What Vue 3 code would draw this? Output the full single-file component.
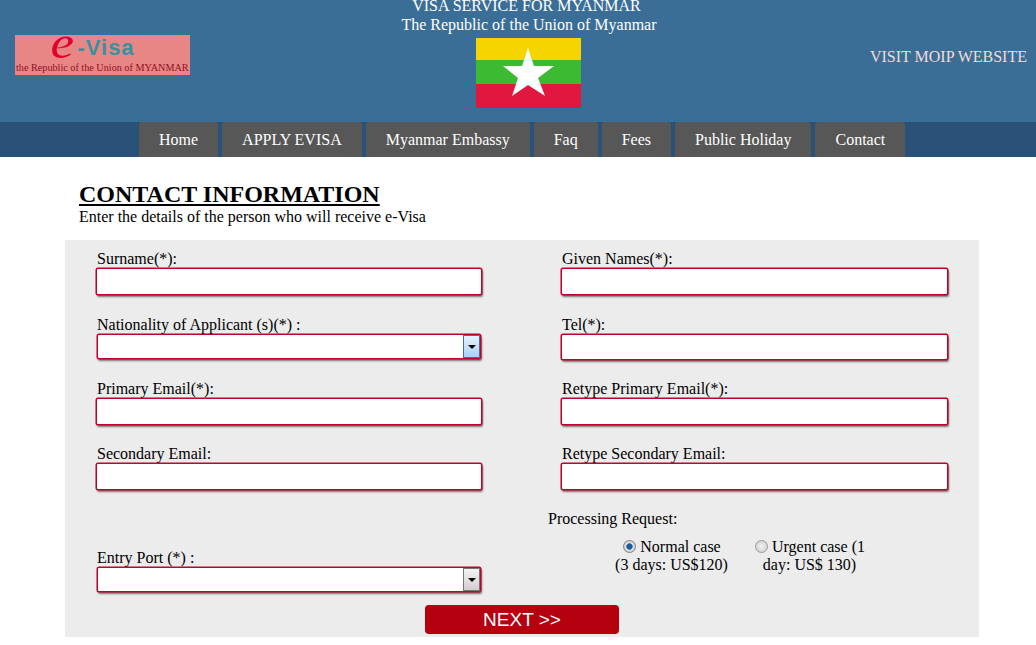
<script setup>
const nav = ['Home', 'APPLY EVISA', 'Myanmar Embassy', 'Faq', 'Fees', 'Public Holiday', 'Contact']
</script>

<template>
  <div class="page">
    <header class="top">
      <div class="logo">
        <div class="logo-mark"><span class="logo-e">e</span><span class="logo-visa">-Visa</span></div>
        <div class="logo-sub">the Republic of the Union of MYANMAR</div>
      </div>
      <div class="center">
        <div class="line one">VISA SERVICE FOR MYANMAR</div>
        <div class="line">The Republic of the Union of Myanmar</div>
        <svg class="flag" viewBox="0 0 105 70" width="105" height="70">
          <rect width="105" height="22" fill="#f5d400" />
          <rect y="22" width="105" height="24" fill="#3cba31" />
          <rect y="46" width="105" height="24" fill="#e2173f" />
          <polygon fill="#fff" points="52,10 58,28 78,28 62,40 69,58 52,47 36,58 42,40 27,28 46,28" />
        </svg>
      </div>
      <a class="moip">VISIT MOIP WEBSITE</a>
    </header>

    <nav class="nav">
      <a v-for="n in nav" :key="n" class="nav-item">{{ n }}</a>
    </nav>

    <main class="main">
      <h1 class="title">CONTACT INFORMATION</h1>
      <p class="sub">Enter the details of the person who will receive e-Visa</p>

      <form class="panel" @submit.prevent>
        <div class="grid">
          <div class="field">
            <label>Surname(*):</label>
            <input type="text" />
          </div>
          <div class="field">
            <label>Given Names(*):</label>
            <input type="text" />
          </div>

          <div class="field">
            <label>Nationality of Applicant (s)(*) :</label>
            <div class="select">
              <span class="arrow blue"><i></i></span>
            </div>
          </div>
          <div class="field">
            <label>Tel(*):</label>
            <input type="text" />
          </div>

          <div class="field">
            <label>Primary Email(*):</label>
            <input type="text" />
          </div>
          <div class="field">
            <label>Retype Primary Email(*):</label>
            <input type="text" />
          </div>

          <div class="field">
            <label>Secondary Email:</label>
            <input type="text" />
          </div>
          <div class="field">
            <label>Retype Secondary Email:</label>
            <input type="text" />
          </div>

          <div class="field bottom">
            <label>Entry Port (*) :</label>
            <div class="select">
              <span class="arrow"><i></i></span>
            </div>
          </div>
          <div class="processing">
            <div class="proc-title">Processing Request:</div>
            <div class="options">
              <label class="option"><span class="radio on"></span> Normal case<br />(3 days: US$120)</label>
              <label class="option"><span class="radio"></span> Urgent case (1 day: US$ 130)</label>
            </div>
          </div>
        </div>
        <div class="actions">
          <button class="next" type="submit">NEXT &gt;&gt;</button>
        </div>
      </form>
    </main>
  </div>
</template>

<style>
html, body { margin: 0; background: #fff; }
</style>

<style scoped>
.page {
  width: 1036px;
  height: 645px;
  overflow: hidden;
  font-family: "Liberation Serif", "Times New Roman", serif;
  font-size: 16px;
  color: #000;
}
.top {
  height: 122px;
  background: #3a6e97;
  position: relative;
  display: flex;
  justify-content: center;
  overflow: hidden;
}
.logo {
  position: absolute;
  left: 15px;
  top: 35px;
  width: 175px;
  height: 40px;
  background: #e88686;
  overflow: hidden;
}
.logo-mark {
  display: flex;
  align-items: baseline;
  margin: -6px 0 0 37px;
  height: 32px;
  line-height: 26px;
}
.logo-e {
  font-style: italic;
  font-size: 46px;
  color: #e2002a;
  line-height: 22px;
  margin-right: 5px;
  transform: translateY(3px) scaleX(1.15);
}
.logo-visa {
  font-family: "Liberation Sans", Arial, sans-serif;
  font-weight: bold;
  font-size: 22px;
  letter-spacing: 1px;
  line-height: 22px;
  color: #36929f;
}
.logo-sub {
  font-size: 10.2px;
  line-height: 14px;
  color: #8f1020;
  white-space: nowrap;
  margin-left: 1px;
}
.center {
  width: 300px;
  margin-left: 22px;
  display: flex;
  flex-direction: column;
  align-items: center;
  color: #fff;
}
.line {
  line-height: 18px;
  white-space: nowrap;
}
.line.one {
  margin: -3px 5px 1px 0;
}
.flag {
  display: block;
  margin: 4px 0 0 -2px;
}
.moip {
  position: absolute;
  right: 9px;
  top: 48px;
  line-height: 18px;
  color: #f2dada;
}
.nav {
  height: 35px;
  background: #2a5278;
  display: flex;
  gap: 4px;
  padding-left: 139px;
}
.nav-item {
  background: #575757;
  color: #fff;
  line-height: 36px;
  padding: 0 20px;
  border-radius: 3px 3px 0 0;
  white-space: nowrap;
}
.main {
  padding: 24px 57px 0 65px;
}
.title {
  margin: 0 0 0 14px;
  font-size: 24px;
  line-height: 27px;
  font-weight: bold;
  text-decoration: underline;
}
.sub {
  margin: 0 0 0 14px;
  line-height: 18px;
}
.panel {
  margin-top: 14px;
  height: 397px;
  background: #ececec;
  padding: 10px 31px 0;
  box-sizing: border-box;
}
.grid {
  display: grid;
  grid-template-columns: 386px 387px;
  grid-template-rows: 46px 44px 45px 45px 82px;
  column-gap: 79px;
  row-gap: 20px;
}
.field {
  display: flex;
  flex-direction: column;
}
.field.bottom {
  justify-content: flex-end;
}
.field label {
  line-height: 18px;
  padding-left: 1px;
  white-space: nowrap;
}
input, .select {
  box-sizing: border-box;
  display: block;
  background: #fff;
  border: 1px solid #c0002a;
  border-radius: 2px;
  box-shadow: 0 0 0 0.5px #c0002a, 1px 2px 2px rgba(0, 0, 0, 0.5);
  margin: 0;
  padding: 0;
  outline: none;
}
input {
  width: 100%;
  height: 27px;
}
.select {
  position: relative;
  height: 25px;
  margin: 0 1px;
}
.arrow {
  position: absolute;
  top: 0;
  right: 0;
  bottom: 0;
  width: 17px;
  box-sizing: border-box;
  background: linear-gradient(#f4f4f4, #cfcfcf);
  border: 1px solid #777;
  display: flex;
  align-items: center;
  justify-content: center;
}
.arrow.blue {
  border-color: #4a6f9c;
  background: linear-gradient(#e6f2fd, #a9d3f7);
}
.arrow i {
  width: 0;
  height: 0;
  border-left: 4px solid transparent;
  border-right: 4px solid transparent;
  border-top: 4px solid #000;
}
.processing {
  margin-left: -13px;
}
.proc-title {
  line-height: 18px;
}
.options {
  display: flex;
  gap: 13px;
  margin: 10px 0 0 61px;
}
.option {
  width: 125px;
  text-align: center;
  line-height: 18px;
}
.radio {
  display: inline-block;
  width: 13px;
  height: 13px;
  box-sizing: border-box;
  border-radius: 50%;
  border: 1px solid #9a9a9a;
  background: radial-gradient(circle, #f2f2f2, #c8c8c8);
  vertical-align: -1px;
  margin: 0 0 0 1px;
}
.radio.on {
  border-color: #808080;
  background: radial-gradient(circle, #1c5a9c 0 2.5px, #4f86bd 3px, #dedede 3.5px, #c4c4c4);
}
.actions {
  display: flex;
  margin-top: 13px;
  padding-left: 329px;
}
.next {
  width: 194px;
  height: 29px;
  border: 0;
  border-radius: 4px;
  background: #b4000f;
  color: #fff;
  font-family: "Liberation Sans", Arial, sans-serif;
  font-size: 19px;
  padding: 0;
}
</style>
